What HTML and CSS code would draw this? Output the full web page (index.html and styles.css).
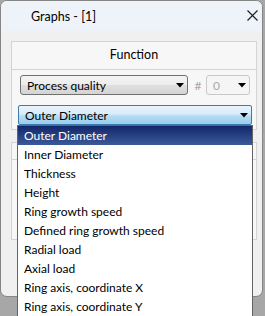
FILE: index.html
```html
<!DOCTYPE html>
<html lang="en">
<head>
  <meta charset="UTF-8">
  <title>Graphs - [1]</title>
  <link rel="stylesheet" href="styles.css">
</head>
<body>

<!-- Dialog window -->
<div class="window">
  <div class="titlebar">
    <span class="title">Graphs - [1]</span>
    <svg class="close" width="11" height="11" viewBox="0 0 11 11">
      <path d="M0.5 0.5 L10.5 10.5 M10.5 0.5 L0.5 10.5" stroke="#1a1a1a" stroke-width="1.1" fill="none"/>
    </svg>
  </div>

  <div class="content">
    <!-- Function group -->
    <div class="group group-function">
      <div class="group-head">Function</div>
      <div class="group-body">
        <div class="combo-row">
          <div class="combo combo-plain">
            <span>Process quality</span>
            <svg class="arrow" width="8" height="5" viewBox="0 0 8 5"><polygon points="0,0 8,0 4,4.5" fill="#000"/></svg>
          </div>
          <span class="hash">#</span>
          <div class="combo combo-num">
            <span>0</span>
            <svg class="arrow" width="8" height="5" viewBox="0 0 8 5"><polygon points="0,0 8,0 4,4.5" fill="#000"/></svg>
          </div>
        </div>
        <div class="combo combo-active">
          <span>Outer Diameter</span>
          <svg class="arrow" width="8" height="5" viewBox="0 0 8 5"><polygon points="0,0 8,0 4,4.5" fill="#000"/></svg>
        </div>
      </div>
    </div>

    <!-- Second group, covered by the open list -->
    <div class="group group-second">
      <div class="group-head"></div>
    </div>
  </div>
</div>

<!-- Open dropdown list -->
<ul class="dropdown">
  <li class="selected">Outer Diameter</li>
  <li>Inner Diameter</li>
  <li>Thickness</li>
  <li>Height</li>
  <li>Ring growth speed</li>
  <li>Defined ring growth speed</li>
  <li>Radial load</li>
  <li>Axial load</li>
  <li>Ring axis, coordinate X</li>
  <li>Ring axis, coordinate Y</li>
</ul>

</body>
</html>
```

FILE: styles.css
```css
body {
  margin: 0;
  width: 265px;
  height: 316px;
  overflow: hidden;
  position: relative;
  background-color: #a7a7a7;
  font-family: Lato, "Noto Sans", sans-serif;
  font-size: 12px;
  color: #000;
}
.window {
  width: 263px;
  height: 297px;
  box-sizing: border-box;
  border: 1px solid #858585;
  border-radius: 7px;
  background-color: #f0f0f0;
  overflow: hidden;
}
.titlebar {
  height: 30px;
  background-color: #eef3f9;
  display: flex;
  align-items: center;
  justify-content: space-between;
  padding: 0 4px 0 30px;
}
.title {
  font-size: 12.5px;
  padding-top: 1px;
}
.close {
  display: block;
  margin-top: -1px;
}
.content {
  padding: 10px 0 0 10px;
}
.group {
  width: 246px;
  box-sizing: border-box;
  border: 1px solid #d4d4d4;
  background-color: #f7f7f7;
}
.group-head {
  height: 27px;
  box-sizing: border-box;
  padding-bottom: 2px;
  border-bottom: 1px solid #d4d4d4;
  display: flex;
  align-items: center;
  justify-content: center;
  font-size: 12.5px;
}
.group-function .group-head {
  height: 28px;
}
.group-body {
  padding: 5px 4px 4px 6px;
}
.combo-row {
  display: flex;
  align-items: center;
  margin: 0 0 10px 2px;
}
.combo {
  height: 20px;
  box-sizing: border-box;
  border-radius: 3px;
  display: flex;
  align-items: center;
  justify-content: space-between;
  padding: 0 3px 0 6px;
}
.arrow {
  display: block;
}
.combo-plain {
  width: 168px;
  border: 1px solid #707070;
  background: linear-gradient(#f4f4f4 0%, #ececec 50%, #dfdfdf 50%, #d4d4d4 100%);
}
.hash {
  width: 18px;
  padding-left: 2px;
  box-sizing: border-box;
  text-align: center;
  color: #a8a8a8;
}
.combo-num {
  width: 44px;
  border: 1px solid #c9c9c9;
  background-color: #f5f5f5;
  color: #a9a9a9;
  padding-left: 6px;
}
.combo-active {
  width: 234px;
  border: 1px solid #3c7bad;
  border-radius: 2px;
  background: linear-gradient(#e8f4fc 0%, #d6ecfa 45%, #b6dcf3 55%, #98cdee 100%);
  padding-left: 6px;
}
.group-second {
  margin-top: 12px;
  height: 98px;
}
.group-second .group-head {
  height: 17px;
}
.dropdown {
  position: absolute;
  left: 17px;
  top: 125px;
  width: 236px;
  height: 200px;
  box-sizing: border-box;
  margin: 0;
  padding: 0;
  list-style: none;
  border: 1px solid #646464;
  background-color: #fff;
}
.dropdown li {
  height: 19px;
  line-height: 19px;
  padding-left: 6px;
}
.dropdown li.selected {
  background: linear-gradient(#12276a, #3b5a98);
  color: #fff;
}
```
